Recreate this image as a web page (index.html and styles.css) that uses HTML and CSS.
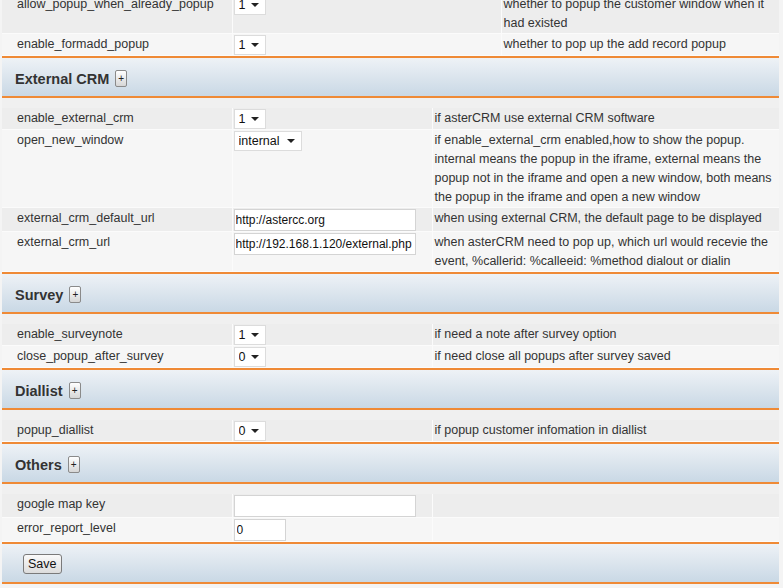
FILE: index.html
```html
<!DOCTYPE html>
<html lang="en">
<head>
    <meta charset="UTF-8">
    <title>System Preference</title>
    <link rel="stylesheet" href="styles.css">
</head>
<body>
    <div class="config">
        <div class="section-body first">
            <table class="opts wide">
                <colgroup><col class="c-name"><col class="c-value"><col></colgroup>
                <tr>
                    <td>allow_popup_when_already_popup</td>
                    <td><span class="select"><select style="width:32px"><option>1</option><option>0</option></select></span></td>
                    <td>whether to popup the customer window when it had existed</td>
                </tr>
                <tr>
                    <td>enable_formadd_popup</td>
                    <td><span class="select"><select style="width:32px"><option>1</option><option>0</option></select></span></td>
                    <td>whether to pop up the add record popup</td>
                </tr>
            </table>
        </div>

        <div class="section-head">
            <h3>External CRM</h3>
            <button class="toggle">+</button>
        </div>
        <div class="section-body">
            <table class="opts">
                <colgroup><col class="c-name"><col class="c-value"><col></colgroup>
                <tr>
                    <td>enable_external_crm</td>
                    <td><span class="select"><select style="width:32px"><option>1</option><option>0</option></select></span></td>
                    <td>if asterCRM use external CRM software</td>
                </tr>
                <tr>
                    <td>open_new_window</td>
                    <td><span class="select"><select style="width:68px"><option>internal</option><option>external</option><option>both</option></select></span></td>
                    <td>if enable_external_crm enabled,how to show the popup. internal means the popup in the iframe, external means the popup not in the iframe and open a new window, both means the popup in the iframe and open a new window</td>
                </tr>
                <tr>
                    <td>external_crm_default_url</td>
                    <td><input type="text" class="text" value="http://astercc.org"></td>
                    <td>when using external CRM, the default page to be displayed</td>
                </tr>
                <tr>
                    <td>external_crm_url</td>
                    <td><input type="text" class="text" value="http://192.168.1.120/external.php"></td>
                    <td>when asterCRM need to pop up, which url would recevie the event, %callerid: %calleeid: %method dialout or dialin</td>
                </tr>
            </table>
        </div>

        <div class="section-head">
            <h3>Survey</h3>
            <button class="toggle">+</button>
        </div>
        <div class="section-body">
            <table class="opts">
                <colgroup><col class="c-name"><col class="c-value"><col></colgroup>
                <tr>
                    <td>enable_surveynote</td>
                    <td><span class="select"><select style="width:32px"><option>1</option><option>0</option></select></span></td>
                    <td>if need a note after survey option</td>
                </tr>
                <tr>
                    <td>close_popup_after_survey</td>
                    <td><span class="select"><select style="width:32px"><option>0</option><option>1</option></select></span></td>
                    <td>if need close all popups after survey saved</td>
                </tr>
            </table>
        </div>

        <div class="section-head">
            <h3>Diallist</h3>
            <button class="toggle">+</button>
        </div>
        <div class="section-body">
            <table class="opts">
                <colgroup><col class="c-name"><col class="c-value"><col></colgroup>
                <tr>
                    <td>popup_diallist</td>
                    <td><span class="select"><select style="width:32px"><option>0</option><option>1</option></select></span></td>
                    <td>if popup customer infomation in diallist</td>
                </tr>
            </table>
        </div>

        <div class="section-head">
            <h3>Others</h3>
            <button class="toggle">+</button>
        </div>
        <div class="section-body">
            <table class="opts">
                <colgroup><col class="c-name"><col class="c-value"><col></colgroup>
                <tr>
                    <td>google map key</td>
                    <td><input type="text" class="text" value=""></td>
                    <td></td>
                </tr>
                <tr>
                    <td>error_report_level</td>
                    <td><input type="text" class="text short" value="0"></td>
                    <td></td>
                </tr>
            </table>
        </div>

        <div class="section-head foot">
            <button class="save">Save</button>
        </div>
    </div>
</body>
</html>
```

FILE: styles.css
```css
* {
    box-sizing: border-box;
}

body {
    margin: 0;
    background-color: #f4f4f4;
    font-family: 'Liberation Sans', Arial, sans-serif;
    font-size: 12.5px;
    color: #333;
}

.config {
    width: 777px;
    margin-left: 2px;
}

.section-head {
    height: 42px;
    display: flex;
    align-items: center;
    gap: 6px;
    padding: 3px 0 0 13px;
    border-top: 2px solid #ef8a36;
    border-bottom: 2px solid #ef8a36;
    background: linear-gradient(#eef2f6, #c9d8e5);
}

.section-head h3 {
    margin: 0;
    font-size: 14.5px;
    font-weight: bold;
    color: #333;
}

.section-head.foot {
    padding: 1px 0 0 21px;
}

.toggle {
    width: 12px;
    height: 17px;
    padding: 0;
    border: 1px solid #8a8a8a;
    border-radius: 2px;
    background: linear-gradient(#ffffff, #d6d6d6);
    font-family: 'Liberation Sans', Arial, sans-serif;
    font-size: 10px;
    line-height: 13px;
    color: #222;
}

.save {
    height: 20px;
    padding: 0 4px;
    border: 1px solid #7a7a7a;
    border-radius: 3px;
    background: linear-gradient(#fafafa, #dcdcdc);
    font-family: 'Liberation Sans', Arial, sans-serif;
    font-size: 12.5px;
    color: #111;
}

.section-body {
    padding-top: 10px;
    background-color: #f0f0f0;
}

.section-body.first {
    padding-top: 0;
    margin-top: -6px;
}

.opts {
    width: 100%;
    border-collapse: collapse;
    table-layout: fixed;
}

.opts col.c-name {
    width: 230px;
}

.opts col.c-value {
    width: 200px;
}

.opts.wide col.c-value {
    width: 269px;
}

.opts td {
    padding: 1px 2px 0;
    line-height: 19px;
    vertical-align: top;
    border-right: 1px solid #fbfbfb;
    border-bottom: 1px solid #fbfbfb;
    background-color: #ededed;
}

.opts td:nth-child(2) {
    padding-left: 1px;
}

.opts td:last-child {
    border-right: none;
}

.opts tr:nth-child(even) td {
    background-color: #f6f6f6;
}

.opts td:first-child {
    padding-left: 15px;
}

.select {
    position: relative;
    display: inline-block;
    vertical-align: top;
}

.select select {
    appearance: none;
    -webkit-appearance: none;
    display: block;
    height: 20px;
    margin: 0;
    padding: 0 0 0 4px;
    border: 1px solid #dcdcdc;
    border-radius: 0;
    background-color: #fff;
    font-family: 'Liberation Sans', Arial, sans-serif;
    font-size: 12.5px;
    color: #111;
}

.select::after {
    content: '';
    position: absolute;
    right: 7px;
    top: 8px;
    border-left: 4px solid transparent;
    border-right: 4px solid transparent;
    border-top: 4px solid #222;
    pointer-events: none;
}

.text {
    display: block;
    width: 182px;
    height: 22px;
    margin: 0;
    padding: 0 1px;
    border: 1px solid #d4d4d4;
    background-color: #fff;
    font-family: 'Liberation Sans', Arial, sans-serif;
    font-size: 12px;
    color: #111;
}

.text.short {
    width: 52px;
    padding: 0 2px;
}
```
